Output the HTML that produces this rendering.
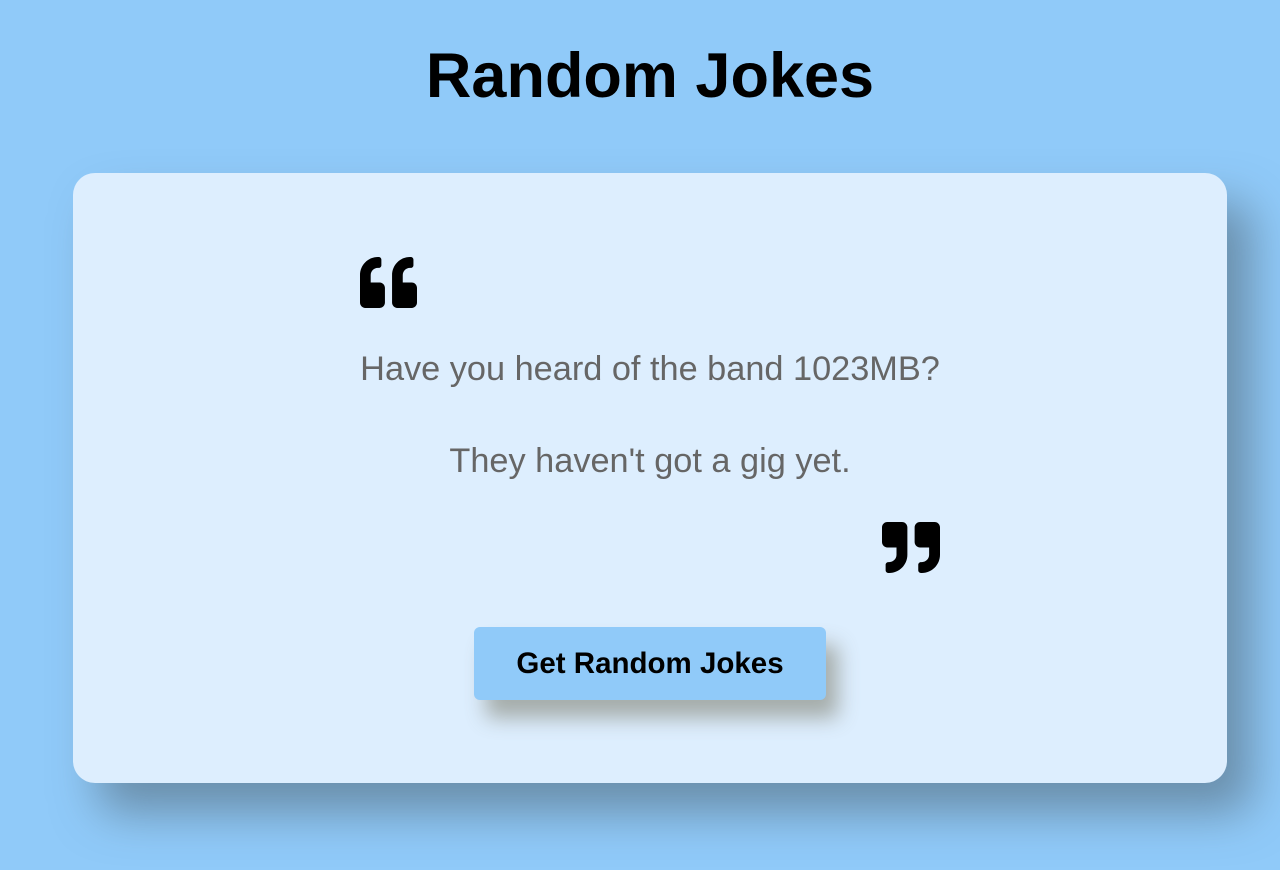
<!DOCTYPE html>
<html><head><meta charset="utf-8"><style>
html,body{margin:0;padding:0;}
body{width:1280px;height:870px;background:#90caf9;font-family:"Liberation Sans",Arial,sans-serif;position:relative;overflow:hidden;}
h1{position:absolute;top:40px;left:0;width:1300px;text-align:center;margin:0;font-size:63px;font-weight:bold;color:#000;line-height:72px;}
.card{position:absolute;left:73px;top:173px;width:1154px;height:610px;background:#ddeefe;border-radius:22px;box-shadow:25px 30px 45px rgba(70,85,95,0.5);}
.q1{position:absolute;left:360px;top:257px;}
.q2{position:absolute;left:882px;top:522px;}
.t{position:absolute;left:0;width:1300px;text-align:center;color:#666;font-size:34.3px;line-height:38px;}
.btn{position:absolute;left:474px;top:627px;width:352px;height:73px;background:#90caf9;border-radius:6px;box-shadow:12px 18px 20px rgba(100,95,70,0.45);line-height:73px;font-weight:bold;font-size:29.5px;color:#000;}
.btn span{position:absolute;left:0;width:352px;text-align:center;}
</style></head><body>
<h1>Random Jokes</h1>
<div class="card"></div>
<svg class="q1" width="57" height="51" viewBox="0 32 512 448" preserveAspectRatio="none"><path d="M464 256h-80v-64c0-35.3 28.7-64 64-64h8c13.3 0 24-10.7 24-24V56c0-13.3-10.7-24-24-24h-8c-88.4 0-160 71.6-160 160v240c0 26.5 21.5 48 48 48h128c26.5 0 48-21.5 48-48V304c0-26.5-21.5-48-48-48zm-288 0H96v-64c0-35.3 28.7-64 64-64h8c13.3 0 24-10.7 24-24V56c0-13.3-10.7-24-24-24h-8C71.6 32 0 103.6 0 192v240c0 26.5 21.5 48 48 48h128c26.5 0 48-21.5 48-48V304c0-26.5-21.5-48-48-48z" fill="#000"/></svg>
<div class="t" style="top:350px;">Have you heard of the band 1023MB?</div>
<div class="t" style="top:442px;">They haven't got a gig yet.</div>
<svg class="q2" width="58" height="51" viewBox="0 32 512 448" preserveAspectRatio="none"><path d="M464 32H336c-26.5 0-48 21.5-48 48v128c0 26.5 21.5 48 48 48h80v64c0 35.3-28.7 64-64 64h-8c-13.3 0-24 10.7-24 24v48c0 13.3 10.7 24 24 24h8c88.4 0 160-71.6 160-160V80c0-26.5-21.5-48-48-48zm-288 0H48C21.5 32 0 53.5 0 80v128c0 26.5 21.5 48 48 48h80v64c0 35.3-28.7 64-64 64h-8c-13.3 0-24 10.7-24 24v48c0 13.3 10.7 24 24 24h8c88.4 0 160-71.6 160-160V80c0-26.5-21.5-48-48-48z" fill="#000"/></svg>
<div class="btn"><span>Get Random Jokes</span></div>
</body></html>
